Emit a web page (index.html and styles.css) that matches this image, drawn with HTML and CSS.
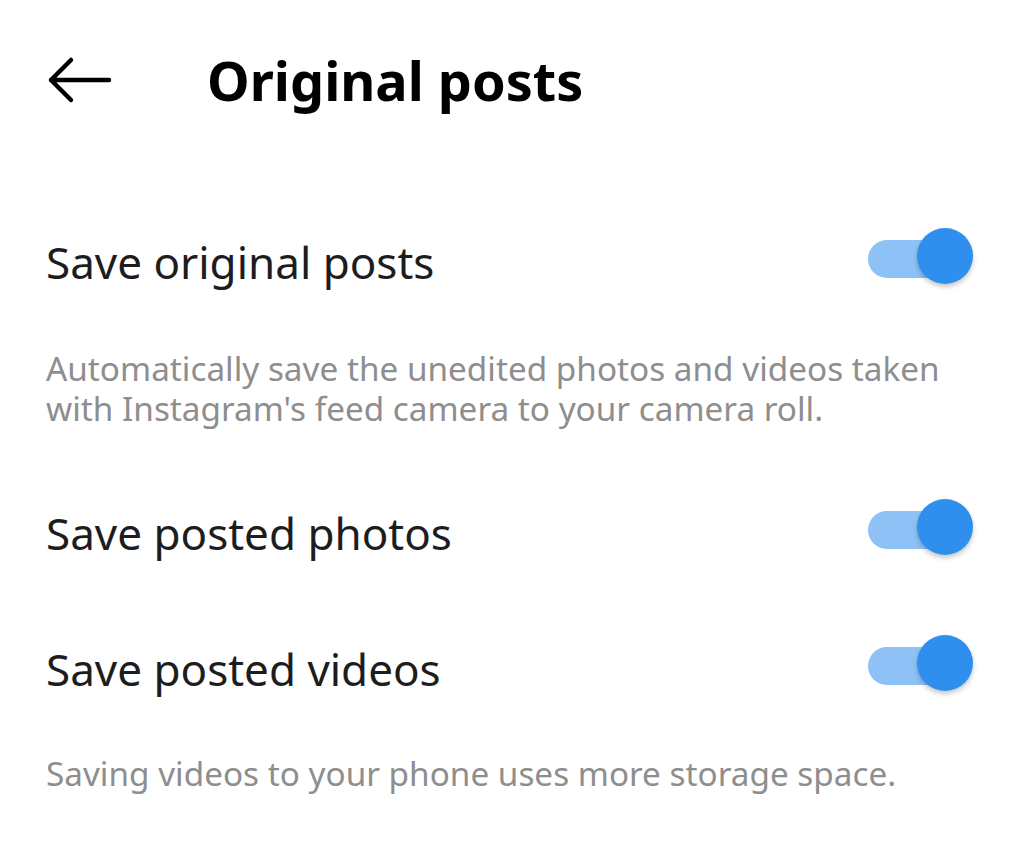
FILE: index.html
```html
<!DOCTYPE html>
<html>
<head>
<meta charset="utf-8">
<link rel="stylesheet" href="styles.css">
</head>
<body>
<div class="page">
  <header class="top">
    <svg class="back" width="66" height="50" viewBox="0 0 66 50">
      <path d="M63 25 H5 M25 5 L5 25 L25 45" fill="none" stroke="#000" stroke-width="4.5" stroke-linecap="round" stroke-linejoin="round"/>
    </svg>
    <h1 class="title">Original posts</h1>
  </header>

  <div class="row first">
    <span class="label">Save original posts</span>
    <span class="toggle"><span class="track"></span><span class="thumb"></span></span>
  </div>
  <p class="desc">Automatically save the unedited photos and videos taken with Instagram's feed camera to your camera roll.</p>

  <div class="row second">
    <span class="label">Save posted photos</span>
    <span class="toggle"><span class="track"></span><span class="thumb"></span></span>
  </div>
  <div class="row third">
    <span class="label">Save posted videos</span>
    <span class="toggle"><span class="track"></span><span class="thumb"></span></span>
  </div>
  <p class="desc last">Saving videos to your phone uses more storage space.</p>
</div>
</body>
</html>
```
FILE: styles.css
```css
html, body {
  margin: 0;
  padding: 0;
  background: #fff;
}
.page {
  width: 1024px;
  height: 865px;
  overflow: hidden;
  font-family: "Noto Sans", "Open Sans", sans-serif;
  padding: 0 46px;
  box-sizing: border-box;
}
.top {
  display: flex;
  align-items: center;
  height: 160px;
}
.back {
  display: block;
  margin-left: 0;
}
.title {
  margin: 0 0 0 95px;
  font-size: 54px;
  font-weight: 700;
  color: #000;
  line-height: 1;
}
.row {
  display: flex;
  align-items: center;
  justify-content: space-between;
  height: 80px;
}
.row.first { margin-top: 62px; }
.row.second { margin-top: 65px; }
.row.third { margin-top: 56px; }
.label {
  font-size: 44px;
  color: #1d1d1d;
}
.toggle {
  position: relative;
  width: 105px;
  height: 56px;
  margin-right: 5px;
  margin-bottom: 12px;
}
.track {
  position: absolute;
  left: 0;
  top: 12px;
  width: 80px;
  height: 38px;
  border-radius: 19px;
  background: #8ec2f6;
}
.thumb {
  position: absolute;
  right: 0;
  top: 0;
  width: 56px;
  height: 56px;
  border-radius: 50%;
  background: #2f8fef;
  box-shadow: 0 3px 5px rgba(0,0,0,0.22);
}
.desc {
  margin: 46px 0 0 0;
  font-size: 33.3px;
  line-height: 40px;
  color: #8e8e8e;
}
.desc.last { margin-top: 44px; }
```
